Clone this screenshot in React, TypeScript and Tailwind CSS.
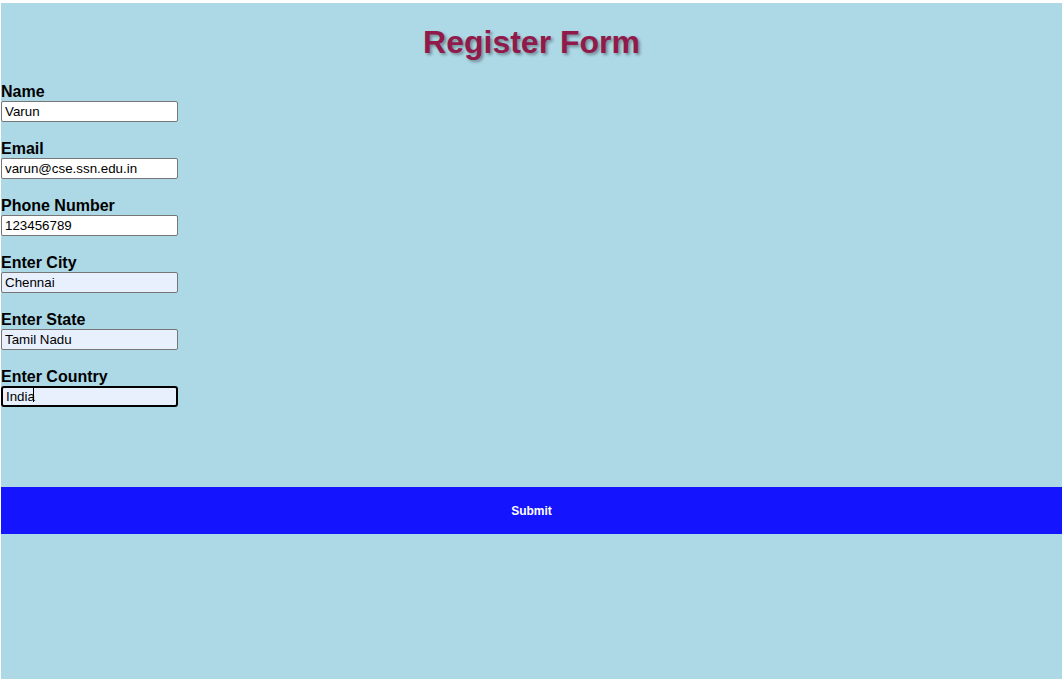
import { useState } from 'react'

type Field = {
  label: string
  value: string
  filled?: boolean
  focused?: boolean
}

const fields: Field[] = [
  { label: 'Name', value: 'Varun' },
  { label: 'Email', value: 'varun@cse.ssn.edu.in' },
  { label: 'Phone Number', value: '123456789' },
  { label: 'Enter City', value: 'Chennai', filled: true },
  { label: 'Enter State', value: 'Tamil Nadu', filled: true },
  { label: 'Enter Country', value: 'India', filled: true, focused: true },
]

const App = () => {
  const [values, setValues] = useState<string[]>(fields.map(f => f.value))

  return (
    <div className="min-h-screen bg-white pt-[3px] pl-[1px] pr-[1px] font-['Liberation_Sans',Arial,sans-serif]">
      <div className="bg-[#add8e6] h-[676px] flex flex-col">
        {/* title */}
        <h1 className="mt-[21px] mb-[21px] text-center text-[32px] leading-[37px] font-bold text-[#901a4a] [text-shadow:2px_2px_3px_rgba(0,0,0,0.35)]">
          Register Form
        </h1>

        {/* fields */}
        <form className="flex flex-col" onSubmit={e => e.preventDefault()}>
          {fields.map((f, i) => (
            <div key={f.label} className="flex flex-col">
              <label className="pt-[2px] text-[16px] leading-[15px] font-bold text-black">{f.label}</label>
              <div className="relative w-[177px] h-[21px] mb-[19px]">
                <input
                  value={values[i]}
                  onChange={e => setValues(values.map((v, j) => (j === i ? e.target.value : v)))}
                  className={`w-full h-full rounded-[2px] px-[3px] text-[13.33px] text-black outline-none ${
                    f.filled ? 'bg-[#e8f0fe]' : 'bg-white'
                  } ${f.focused ? 'border-2 border-black rounded-[3px] px-[2px]' : 'border border-[#767676]'}`}
                />
                {f.focused && (
                  <span className="absolute left-[32px] top-[3px] w-[1px] h-[15px] bg-black" />
                )}
              </div>
            </div>
          ))}

          <button
            type="submit"
            className="mt-[63px] h-[47px] w-full bg-[#1414ff] text-white text-[12px] font-bold"
          >
            Submit
          </button>
        </form>
      </div>
    </div>
  )
}

export default App
